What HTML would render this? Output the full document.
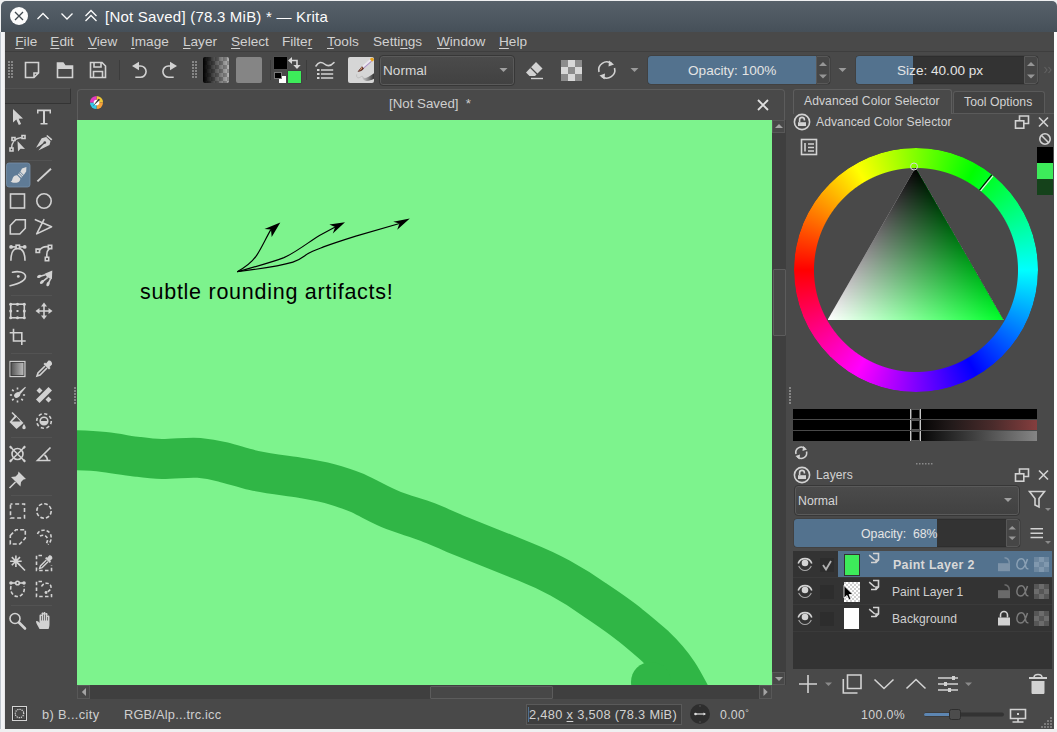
<!DOCTYPE html>
<html><head><meta charset="utf-8">
<style>
*{box-sizing:border-box;margin:0;padding:0}
html,body{width:1057px;height:732px;overflow:hidden;background:#eff0f1;font-family:"Liberation Sans",sans-serif;font-size:13.5px;color:#d4d4d4}
.a{position:absolute}
svg{position:absolute;overflow:visible}
.t{position:absolute;white-space:nowrap;line-height:16px;height:16px}
#title{left:1px;top:1px;width:1056px;height:31px;border-radius:5px 5px 0 0;background:linear-gradient(#57616a,#465059)}
#leftstrip{left:0px;top:32px;width:5px;height:697px;background:linear-gradient(90deg,#b9c0c8 0,#c4cad0 1px,#f4f5f7 1.5px,#f1f2f4 4.3px,#d0d0d0 5px)}
#rightstrip{left:1054px;top:32px;width:3px;height:697px;background:#fcfcfc}
#win{left:5px;top:32px;width:1049px;height:697px;background:#494949}
.ic{stroke:#d2d2d2;fill:none;stroke-width:1.6}
.if{fill:#d2d2d2;stroke:none}
u{text-decoration-thickness:1px;text-underline-offset:2px}
.m{top:34px;font-size:13.6px;color:#d0d0d0}
</style></head><body>
<div class="a" id="title"></div>
<div class="a" id="leftstrip"></div>
<div class="a" id="rightstrip"></div>
<div class="a" id="win"></div>

<svg style="left:0;top:0" width="540" height="33">
<circle cx="19" cy="16" r="9" fill="#fcfcfc"/>
<path d="M15 12L23 20M23 12L15 20" stroke="#3f484f" stroke-width="1.3" fill="none"/>
<path d="M37.5 19L43 13.5L48.5 19" stroke="#fcfcfc" stroke-width="1.3" fill="none"/>
<path d="M61.5 13.5L67 19L72.5 13.5" stroke="#fcfcfc" stroke-width="1.3" fill="none"/>
<path d="M85.5 16L91 10.5L96.5 16M85.5 21L91 15.5L96.5 21" stroke="#fcfcfc" stroke-width="1.3" fill="none"/>
</svg>
<div class="t" id="ttl" style="left:105px;top:8px;font-size:15px;line-height:18px;height:18px;color:#fcfcfc;letter-spacing:0.22px">[Not Saved] (78.3 MiB) * — Krita</div>


<div class="a" style="left:5px;top:51px;width:1049px;height:1px;background:#3e3e3e"></div>
<div class="t m" style="left:15.300px"><u>F</u>ile</div>
<div class="t m" style="left:50.300px"><u>E</u>dit</div>
<div class="t m" style="left:88px"><u>V</u>iew</div>
<div class="t m" style="left:131px"><u>I</u>mage</div>
<div class="t m" style="left:183px"><u>L</u>ayer</div>
<div class="t m" style="left:231px"><u>S</u>elect</div>
<div class="t m" style="left:282px">Filte<u>r</u></div>
<div class="t m" style="left:327px"><u>T</u>ools</div>
<div class="t m" style="left:373px">Setti<u>n</u>gs</div>
<div class="t m" style="left:437px"><u>W</u>indow</div>
<div class="t m" style="left:499px"><u>H</u>elp</div>


<svg style="left:0;top:0" width="1057" height="90">
<!-- handles -->
<g fill="#868686"><g id="hd"><rect x="8" y="61" width="2" height="2"/><rect x="11" y="61" width="2" height="2"/><rect x="8" y="64" width="2" height="2"/><rect x="11" y="64" width="2" height="2"/><rect x="8" y="67" width="2" height="2"/><rect x="11" y="67" width="2" height="2"/><rect x="8" y="70" width="2" height="2"/><rect x="11" y="70" width="2" height="2"/><rect x="8" y="73" width="2" height="2"/><rect x="11" y="73" width="2" height="2"/><rect x="8" y="76" width="2" height="2"/><rect x="11" y="76" width="2" height="2"/></g><use href="#hd" x="184"/></g>
<rect x="119" y="60" width="1" height="20" fill="#3c3c3c"/>
<!-- new -->
<path class="ic" d="M25.5 62.5H38.5V73L34 77.5H25.5Z M38.5 73H34V77.5"/>
<!-- open -->
<path class="ic" d="M57.5 77.5V63H63L65 66H72.5V77.5Z"/><path class="if" d="M57 63H63L65 66H73V69H57Z"/>
<!-- save -->
<path class="ic" d="M90.500 62.500H102L105.500 66V77.500H90.500Z M94 62.500V67H101V62.500 M93.500 77.500V71.500H102.500V77.500"/>
<!-- undo -->
<path class="ic" stroke-width="2.100" d="M138 66H140.500A5.600 5.600 0 0 1 140.500 77.200H135.300"/><path class="if" d="M132 66L139 61.800V70.200Z"/>
<!-- redo -->
<path class="ic" stroke-width="2.100" d="M171 66H168.500A5.600 5.600 0 0 0 168.500 77.200H173.700"/><path class="if" d="M177 66L170 61.800V70.200Z"/>
</svg>
<!-- gradient swatch -->
<div class="a" style="left:203px;top:57px;width:26px;height:26px;border-radius:2px;background:linear-gradient(90deg,#000 0%,rgba(0,0,0,0) 100%),repeating-conic-gradient(#8c8c8c 0 25%,#b4b4b4 0 50%) 0 0/8px 8px"></div>
<div class="a" style="left:236px;top:57px;width:26px;height:26px;border-radius:2px;background:#858585"></div>
<!-- fg/bg -->
<div class="a" style="left:273.5px;top:57px;width:13px;height:12px;background:#000;box-shadow:0 0 0 0.5px #555"></div>
<div class="a" style="left:287.5px;top:71px;width:13px;height:12px;background:#3dec5a;box-shadow:0 0 0 0.5px #3a3a3a"></div>
<div class="a" style="left:279px;top:75.500px;width:6.500px;height:7px;background:#fff"></div>
<div class="a" style="left:274px;top:71.500px;width:7.500px;height:7px;background:#000;border:1px solid #777"></div>
<svg style="left:0;top:0" width="1057" height="90">
<path d="M291.500 60.500H297V65.500" stroke="#d8d8d8" stroke-width="1.600" fill="none"/><path d="M288 60.500L292 57V64Z M297 69L293.300 65H300.700Z" fill="#d8d8d8"/>
<rect x="270" y="60" width="1" height="20" fill="#3c3c3c"/><rect x="306" y="60" width="1" height="20" fill="#3c3c3c"/>
<!-- brush settings icon -->
<path class="ic" stroke-width="2.200" stroke-linecap="round" d="M316 66C318.500 62 321.500 61.500 324.500 64S330.500 66.500 334 62.500"/>
<path class="ic" stroke-width="2.100" d="M321 70H333.200M321 74H333.200M321 78H333.200"/><path class="if" d="M317 69H319.500V71H317ZM317 73H319.500V75H317ZM317 77H319.500V79H317Z"/>
</svg>
<!-- brush preset -->
<div class="a" style="left:348px;top:57px;width:26px;height:26px;border-radius:2px;background:#d6d6d6;overflow:hidden">
<svg style="left:0;top:0" width="26" height="26"><defs><linearGradient id="bs" x1="0" x2="1"><stop offset="0" stop-color="#c6c6c6"/><stop offset="0.45" stop-color="#8a8a8a"/><stop offset="1" stop-color="#2e2e2e"/></linearGradient></defs>
<path d="M8.700 17.500C8 21 10.500 21.500 12.500 20C14.500 18.500 15 19.500 15 21" stroke="#bdbdbd" stroke-width="1" fill="none"/>
<path d="M14.500 19.800C16 22 20 21 26.500 15.800L26.500 21.500C21 24.500 16.500 25 14.500 21.500Z" fill="url(#bs)"/>
<path d="M14 9.300L22 2.300L24 4.600L16 11.600Z" fill="#ece8f0"/><path d="M15.300 10.800L23.300 3.800L24 4.600L16 11.600Z" fill="#a98fc0"/>
<path d="M14 9.300L16 11.600C14 14 12 15 9.500 14.800C11 13 12.500 11 14 9.300Z" fill="#5a2a22"/><path d="M13.700 10L14.500 10.800C13.500 12.500 12.500 13.500 11 14.200C12 12.800 12.800 11.500 13.700 10Z" fill="#d9a078"/>
<path d="M22 2.300C22.500 0.800 24.500 0.300 25.500 1.500C26.500 2.700 25.500 4.300 24 4.600Z" fill="#e8a21c"/></svg></div>
<!-- combo -->
<div class="a" style="left:379px;top:54.500px;width:135.500px;height:31px;border:1px solid #373737;border-radius:4px;background:linear-gradient(#4b4b4b,#414141);box-shadow:inset 0 0 0 1px #5a5a5a"></div>
<div class="t" style="left:383px;top:63px;font-size:13.6px;color:#d6d6d6">Normal</div>
<svg style="left:0;top:0" width="1057" height="90">
<path class="if" fill="#9a9a9a" d="M499.500 68H507.500L503.500 72Z" style="fill:#a0a0a0"/>
<!-- eraser -->
<path class="if" d="M536 62L542.500 68.500L535 76H529.500L526 72.500Z"/><path d="M531 78.500H543" stroke="#d2d2d2" stroke-width="1.4"/><path d="M530.500 67.500L537.500 74.500" stroke="#494949" stroke-width="1.2"/>
<!-- alpha checker -->
<g><rect x="561" y="60" width="21" height="21" fill="#5e5e5e"/><g fill="#d8d8d8"><rect x="568" y="60" width="7" height="7"/><rect x="561" y="67" width="7" height="7"/><rect x="575" y="67" width="7" height="7"/><rect x="568" y="74" width="7" height="7"/></g><g fill="#8c8c8c"><rect x="561" y="60" width="7" height="7"/><rect x="575" y="60" width="7" height="7"/><rect x="568" y="67" width="7" height="7"/><rect x="561" y="74" width="7" height="7"/><rect x="575" y="74" width="7" height="7"/></g></g>
<!-- reload -->
<path class="ic" stroke-width="1.8" d="M599 72A8 8 0 0 1 611.500 63.500M614.500 68A8 8 0 0 1 602 76.500"/><path class="if" d="M609 60.500L614 64.500L608.500 66.500ZM604.500 79.500L599.500 75.500L605 73.500Z"/>
<path d="M630.500 68H638.500L634.500 72Z" fill="#9a9a9a"/>
<path d="M838.500 68H846.500L842.500 72Z" fill="#9a9a9a"/>
<path d="M1044.500 67L1047 70L1044.500 73M1048.500 67L1051 70L1048.500 73" stroke="#626262" stroke-width="1.100" fill="none"/>
</svg>
<!-- opacity slider -->
<div class="a" style="left:647.5px;top:56px;width:182.5px;height:28px;border-radius:3px;background:#333;box-shadow:inset 0 0 0 1px #2e2e2e,0 0 0 0.500px #3a3a3a;overflow:hidden"><div class="a" style="left:0;top:0;width:168.5px;height:28px;background:#53728e"></div><div class="a" style="left:168.5px;top:0;width:14px;height:28px;background:#464646;border:1px solid #585858;border-radius:0 3px 3px 0"></div></div>
<div class="t" style="left:688px;top:63px;font-size:13.6px;color:#e4e4e4">Opacity: 100%</div>
<div class="a" style="left:856px;top:56px;width:182px;height:28px;border-radius:3px;background:#333;box-shadow:inset 0 0 0 1px #2e2e2e,0 0 0 0.500px #3a3a3a;overflow:hidden"><div class="a" style="left:0;top:0;width:57px;height:28px;background:#53728e"></div><div class="a" style="left:168px;top:0;width:14px;height:28px;background:#464646;border:1px solid #585858;border-radius:0 3px 3px 0"></div></div>
<div class="t" style="left:897px;top:63px;font-size:13.6px;color:#e4e4e4">Size: 40.00 px</div>
<svg style="left:0;top:0" width="1057" height="90"><g fill="#969696"><path d="M819 66H827L823 62Z M819 74.500H827L823 78.500Z M1027 66H1035L1031 62Z M1027 74.500H1035L1031 78.500Z"/></g></svg>


<svg style="left:0;top:0" width="90" height="700"><rect x="11" y="160" width="41" height="1" fill="#535353"/><rect x="11" y="295" width="41" height="1" fill="#535353"/><rect x="11" y="353" width="41" height="1" fill="#535353"/><rect x="11" y="437" width="41" height="1" fill="#535353"/><rect x="11" y="495" width="41" height="1" fill="#535353"/><rect x="11" y="605" width="41" height="1" fill="#535353"/><g fill="#858585"><rect x="74" y="387" width="2" height="2"/><rect x="74" y="390" width="2" height="2"/><rect x="74" y="393" width="2" height="2"/><rect x="74" y="396" width="2" height="2"/><rect x="74" y="399" width="2" height="2"/><rect x="74" y="402" width="2" height="2"/></g><g transform="translate(17.5 117)"><path class="if" d="M-4.500 -8V5.500L-1.200 2.600L1.300 8L3.600 7L1.200 1.700L5.500 1.500Z"/></g><g transform="translate(44 117)"><path class="if" d="M-7 -7.500H7V-3.500H5.500V-5.700H1V6H3.500V7.500H-3.500V6H-1V-5.700H-5.500V-3.500H-7Z"/></g><g transform="translate(17.5 143.5)"><path class="ic" stroke-width="1.3" d="M-6 5.500C-6 -1 -4 -5 4 -6"/><path class="ic" stroke-width="1.2" d="M-7.500 4.500H-4.500V7.500H-7.500ZM-5.500 -6H-2.500V-3H-5.500ZM4.500 -8H7.500V-5H4.500Z" style="fill:#494949"/><path class="if" d="M0 -2.500L7.500 5.500L3 5.200L0.500 8Z"/></g><g transform="translate(44 143.5)"><path class="if" d="M-8 4.300L-2.300 -5.300L2.200 -6.500L6.500 -2.200L5.500 1.500L-5.600 6.900L-0.500 0.300Z"/><path class="ic" stroke-width="1.800" d="M2.800 -8L7.800 -3.600"/><path d="M-7 5.800L0.200 -0.500" stroke="#494949" stroke-width="1.300"/><circle cx="0.800" cy="-0.900" r="1.300" fill="#494949"/></g><g transform="translate(17.5 175)"><rect x="-11" y="-12" width="23.500" height="24" rx="2.500" fill="#5f7b96" stroke="#7790a9" stroke-width="0.800"/><g fill="#dcdcdc"><path d="M-0.300 0.300L2.800 3.400C3 6 0.500 8 -2.500 7.800C-4.500 7.800 -6 7.300 -7 6.800C-5 6 -5.500 4 -4.500 2.500C-3.500 0.800 -1.800 0 -0.300 0.300Z"/><path d="M0.400 -0.500L1.200 -1.400L4.500 1.900L3.700 2.800Z"/><path d="M1.700 -1.900L2.400 -2.700L5.800 0.600L5 1.400Z"/><path d="M2.900 -3.300L4.500 -6.600L8.900 -7.900L8.700 -3.600L6.200 0Z"/></g></g><g transform="translate(44 175)"><path d="M-6.600 6.400L7 -6.200" stroke="#d2d2d2" stroke-width="1.900"/></g><g transform="translate(17.5 201)"><rect class="ic" x="-7" y="-7" width="14" height="14" stroke-width="1.700"/></g><g transform="translate(44 201)"><circle class="ic" cx="0" cy="0" r="7.200" stroke-width="1.700"/></g><g transform="translate(17.5 227)"><path class="ic" stroke-width="1.900" d="M-7.200 -1.500L-1.700 -7.200H7.800V1.200L2.300 7H-7.200Z"/></g><g transform="translate(44 227)"><path class="ic" stroke-width="1.900" stroke-linejoin="round" stroke-linecap="round" d="M-8.600 -7.300L7.600 -0.200L-7.300 6.900L-0.100 -7.400"/></g><g transform="translate(17.5 253)"><path class="ic" stroke-width="1.900" d="M-6.600 7.800C-6.600 -1 -3.500 -4.700 0.400 -4.700S7.500 -1 7.500 7.800"/><path class="ic" stroke-width="1.300" d="M-6.400 -6.100H7"/><circle cx="-6.400" cy="-6.100" r="1.900" class="if"/><circle cx="7.200" cy="-6.100" r="1.900" class="if"/><rect x="-1.400" y="-7.800" width="3.400" height="3.400" class="ic" stroke-width="1.100" style="fill:#494949"/></g><g transform="translate(44 253)"><path class="ic" stroke-width="1.800" d="M-4.500 -2.800C-2 -6 2 -6.600 4.300 -6.200M5.300 -4.300C2.700 -2 2.500 1.500 3 4.300"/><path class="ic" stroke-width="1.200" d="M-7.900 -3.900H-4.500V-0.500H-7.900ZM4.300 -7.800H7.700V-4.400H4.300ZM1.300 4.300H4.700V7.700H1.300Z" style="fill:#494949"/></g><g transform="translate(17.5 279)"><path class="ic" stroke-width="1.900" stroke-linecap="round" d="M-5 -6.800C0 -8 7 -7.500 8 -3C8.500 1.500 0 5 -7.400 6.800"/><circle cx="0.800" cy="-2.600" r="1.400" class="if"/></g><g transform="translate(44 279)"><path class="if" d="M8.300 -8.400L0.600 -5.300L2.600 -2.600L5.200 -0.800L7.900 0.200Z"/><path class="ic" stroke-width="1.200" d="M1.500 -4.300L-4.700 -2.600M3.800 -1.700L-2.100 3.100M6.700 -0.500L4 5.100"/><ellipse cx="-4.700" cy="-2.600" rx="2.300" ry="1.500" transform="rotate(-20 -4.700 -2.600)" class="if"/><ellipse cx="-2.100" cy="3.100" rx="2.300" ry="1.500" transform="rotate(-40 -2.100 3.100)" class="if"/><ellipse cx="4" cy="5.100" rx="2.300" ry="1.500" transform="rotate(-65 4 5.100)" class="if"/></g><g transform="translate(17.5 311)"><rect class="ic" x="-6.800" y="-6.800" width="13.600" height="13.600" stroke-width="1.700"/><g class="if"><circle cx="-6.8" cy="-6.8" r="1.500"/><circle cx="-6.8" cy="0" r="1.500"/><circle cx="-6.8" cy="6.8" r="1.500"/><circle cx="0" cy="-6.8" r="1.500"/><circle cx="0" cy="6.8" r="1.500"/><circle cx="6.8" cy="-6.8" r="1.500"/><circle cx="6.8" cy="0" r="1.500"/><circle cx="6.8" cy="6.8" r="1.500"/><rect x="-1" y="-1" width="2" height="2"/></g></g><g transform="translate(44 311)"><path class="ic" stroke-width="1.600" d="M0 -6V6M-6 0H6"/><path class="if" d="M0 -8.500L3 -4.500H-3ZM0 8.500L3 4.500H-3ZM-8.500 0L-4.500 -3V3ZM8.500 0L4.500 -3V3Z"/></g><g transform="translate(17.5 337)"><path class="ic" stroke-width="2.100" d="M-4 -8.200V4H8.200M-7.800 -4.300H4.300V8"/></g><g transform="translate(17.5 369)"><defs><linearGradient id="gg" x1="0" x2="1"><stop offset="0" stop-color="#4a4a4a"/><stop offset="1" stop-color="#c8c8c8"/></linearGradient></defs><rect x="-7.500" y="-7.600" width="15" height="15.200" fill="url(#gg)" stroke="#d2d2d2" stroke-width="1.100"/><rect x="-6.400" y="-6.500" width="12.800" height="13" fill="none" stroke="#3a3a3a" stroke-width="0.800"/></g><g transform="translate(44 369)"><path class="if" d="M4.500 -8.500C6.500 -9 8.500 -7 8 -4.500L5.500 -2L6.500 -1L5 0.500L-0.500 -5L1 -6.500L2 -5.500Z"/><path class="ic" stroke-width="1.400" d="M1 -3L-6 4L-7 7L-4 6L3 -1"/></g><g transform="translate(17.5 395)"><ellipse cx="-0.300" cy="0" rx="3.400" ry="2.400" transform="rotate(-38 -0.300 0)" class="if"/><path class="if" d="M1.300 -2.800L7.700 -8.300L8.400 -7.400L3 -1Z"/><path class="ic" stroke-width="1.700" d="M5.40 0.00L7.60 0.00M3.82 3.82L5.37 5.37M0.00 5.40L0.00 7.60M-3.82 3.82L-5.37 5.37M-5.40 0.00L-7.60 0.00M-3.82 -3.82L-5.37 -5.37M-0.00 -5.40L-0.00 -7.60"/></g><g transform="translate(44 395)"><path class="if" d="M4.500 -8L8 -4.500L-4.500 8L-8 4.500Z"/><path class="if" d="M-4.500 -7.500L-1.500 -4.500L-4.500 -1.500L-7.500 -4.500ZM4.500 1.500L7.500 4.500L4.500 7.500L1.500 4.500Z"/></g><g transform="translate(17.5 421)"><path class="if" d="M-2 -6L6 2L-1 8L-8 1Z"/><path class="ic" stroke-width="1.500" d="M-5.500 -8.500L-1 -4"/><path d="M-5.500 0.500L3 0.500L-1 -4Z" fill="#494949"/><path class="if" d="M6.500 3C8 5 8.500 6.500 8 7.500C7.500 8.500 5.500 8.500 5 7.500C4.500 6.500 5 5 6.500 3Z"/></g><g transform="translate(44 421)"><circle class="ic" cx="0" cy="0" r="7.300" stroke-width="1.600" stroke-dasharray="3.200 2.530"/><circle class="ic" cx="0" cy="0" r="3.800" stroke-width="1.300"/><path class="if" d="M-3.800 0H3.800A3.800 3.800 0 0 1 -3.800 0Z"/></g><g transform="translate(17.5 454)"><circle class="ic" cx="0" cy="0" r="5.500" stroke-width="1.400"/><path class="ic" stroke-width="1.400" d="M-7 -7L7 7M7 -7L-7 7"/><path class="if" d="M-8.500 -7L-7 -8.500L-5 -6.500L-6.500 -5ZM8.500 -7L7 -8.500L5 -6.500L6.500 -5ZM-8.500 7L-7 8.500L-5 6.500L-6.500 5ZM8.500 7L7 8.500L5 6.500L6.500 5Z"/></g><g transform="translate(44 454)"><path class="ic" stroke-width="1.700" d="M6.500 -6.500L-6.500 6.500H6.500"/><path class="ic" stroke-width="1.400" d="M0.500 1C2.500 2.500 3.500 4.500 3.500 6.500"/></g><g transform="translate(17.5 480)"><path class="if" d="M1 -8.500L8.500 -1L6 -0.500L3.500 2L3 6.500L-6.500 -3L-2 -3.500L0.500 -6Z"/><path class="ic" stroke-width="1.400" d="M-2 2L-8 8"/></g><g transform="translate(17.5 511)"><rect class="ic" x="-7" y="-7" width="14" height="14" stroke-width="1.900" stroke-dasharray="4 2.670" stroke-dashoffset="2"/></g><g transform="translate(44 511)"><circle class="ic" cx="0" cy="0" r="7.200" stroke-width="1.900" stroke-dasharray="3.650 2"/></g><g transform="translate(17.5 537)"><path class="ic" stroke-width="1.900" stroke-dasharray="4 2.150" d="M-7.200 -1.500L-1.700 -7.200H7.800V1.200L2.300 7H-7.200Z"/></g><g transform="translate(44 537)"><path class="ic" stroke-width="1.700" stroke-dasharray="3.300 2" d="M-6.500 -3C-5 -8 4 -8 6.500 -3C8 1 7 5 4 7.500M-4 -1C0 -3 3 -1 3.500 2C3.800 4 3 5.500 2 7"/></g><g transform="translate(17.5 563)"><path class="ic" stroke-width="1.700" d="M-1.600 -1.800L7.500 7.500"/><path class="ic" stroke-width="1.500" d="M-1.600 -7.600V4M-7.400 -1.800H4.200M-5.700 -5.900L2.500 2.300M2.500 -5.900L-5.700 2.300"/></g><g transform="translate(44 563)"><path class="ic" stroke-width="1.600" stroke-dasharray="3.500 2.300" d="M-2 -7.500H-7.500V7.500H7.500V2"/><g transform="translate(1.500 -0.500) scale(0.850)"><path class="if" d="M4.500 -8.500C6.500 -9 8.500 -7 8 -4.500L5.500 -2L6.500 -1L5 0.500L-0.500 -5L1 -6.500L2 -5.500Z"/><path class="ic" stroke-width="1.400" d="M1 -3L-6 4L-7 7L-4 6L3 -1"/></g></g><g transform="translate(17.5 589)"><path class="ic" stroke-width="1.700" stroke-dasharray="3.500 2" d="M-6.500 -3C-8 3 -4 7.500 0 7.500S8 3 6.500 -3"/><path class="ic" stroke-width="1.200" d="M-6 -6H6"/><circle cx="-6.500" cy="-6" r="1.800" class="if"/><circle cx="6.500" cy="-6" r="1.800" class="if"/><circle cx="0" cy="-6" r="1.800" class="ic" stroke-width="1.100" style="fill:#494949"/></g><g transform="translate(44 589)"><path class="ic" stroke-width="1.600" stroke-dasharray="3.500 2.300" d="M-2 -7.500H-7.500V7.500H7.500V5"/><path class="ic" stroke-width="1.600" stroke-dasharray="3.300 1.800" d="M-2.500 -2.500C0 -7.500 7.500 -6.500 7 -1.500C6.500 2 3 2.500 2.500 4.500"/><circle cx="2" cy="3.500" r="1.400" class="if"/></g><g transform="translate(17.5 621)"><circle class="ic" cx="-2.500" cy="-2.500" r="5" stroke-width="1.800"/><path d="M1.500 1.500L7.500 7.500" stroke="#d2d2d2" stroke-width="2.600" stroke-linecap="round"/></g><g transform="translate(44 621)"><path class="if" d="M-4.500 8C-6 5 -8 2 -8 0.500C-7 -0.500 -5.500 0.500 -4.500 2V-5.500C-4.500 -7 -2.500 -7 -2.500 -5.500V-7.500C-2.500 -9 -0.500 -9 -0.500 -7.500V-8C-0.500 -9.500 1.500 -9.500 1.500 -8V-7C1.500 -8.500 3.500 -8.500 3.500 -7V-4.500C3.500 -6 5.500 -6 5.500 -4.500V3C5.500 5.500 5 7 4.500 8Z"/><path d="M-2.500 -5V-0.500M-0.500 -6.500V-0.500M1.500 -6.500V-0.500M3.500 -4V-0.500" stroke="#494949" stroke-width="0.700"/></g></svg>

<!-- document tab frame -->
<div class="a" style="left:77px;top:89px;width:708px;height:32px;border:1px solid #5c5c5c;border-bottom:none;border-radius:4px 4px 0 0;background:#494949"></div>
<div class="a" style="left:5px;top:88px;width:66px;height:16px;background:#464646;border-top:1px solid #525252;border-bottom:1px solid #343434;border-right:1px solid #343434"></div>
<div class="t" style="left:389px;top:96px;font-size:13.3px;color:#cfcfcf">[Not Saved]&nbsp; *</div>
<svg style="left:756px;top:98px" width="14" height="14"><path d="M2 2L12 12M12 2L2 12" stroke="#e0e0e0" stroke-width="1.8" fill="none"/></svg>
<!-- krita doc icon -->
<svg style="left:89px;top:95px" width="15" height="15" viewBox="0 0 16 16"><circle cx="8" cy="8" r="7" fill="#3a3a3a"/><path d="M8 1A7 7 0 0 1 15 8L8 8Z" fill="#f0c838"/><path d="M15 8A7 7 0 0 1 8 15L8 8Z" fill="#f7a23a"/><path d="M8 15A7 7 0 0 1 1 8L8 8Z" fill="#36c8e8"/><path d="M1 8A7 7 0 0 1 8 1L8 8Z" fill="#e13cc0"/><circle cx="8" cy="8" r="3" fill="#fff"/><path d="M4 12L10 4L12 5Z" fill="#3a3a3a"/></svg>
<!-- canvas -->
<div class="a" style="left:77px;top:120px;width:695px;height:565px;background:#7df38d;overflow:hidden">
<svg style="left:0;top:0" width="695" height="565" viewBox="77 120 695 565">
<path d="M50 450 C65 450 90 450.5 104 452 C120 454 130 456 138 456.8 C148 458.3 154 459 162 459 C176 459 188 457 199 457.9 C208 458.6 215 460 223 462 C234 464.8 243 468 254 470.5 C270 474 286 475.5 301.6 478 C314 480.2 325 482 335.7 485.4 C345 488.3 352 490.5 359.5 494 C372 500 381 505.5 393.6 510.5 C405 515 416 517.5 427.6 522 C437 525.6 446 530 455 533.7 L490 547.7 L525 561.7 C537 566.5 549 572 560 578 C572 584.5 584 592 595 600 C607 608 619 616 630 625 C639 632 648 640 655 646 C664 654.5 672 664 678 673 C684 682 690 694 696 706" fill="none" stroke="#30b646" stroke-width="40" stroke-linecap="round" stroke-linejoin="round"/>
<circle cx="651" cy="682" r="20" fill="#30b646"/>
<g fill="none" stroke="#000" stroke-width="1.15">
<path d="M237.2 271.7 C246 267 253 261 257 254.9 C262 247 266 238 271 229.4"/>
<path d="M237.2 271.7 C252 267.500 270 263 283.900 257.600 C296 252.500 310 241 319.900 235.200 L335.200 227.100"/>
<path d="M237.2 271.7 C255 269.500 278 266.500 292.900 262.100 C300 260 304 256 307.300 254 C312 251 318 249 323.500 246.900 C334 243 345 239.500 355.800 236.100 L399.500 223.500"/>
</g>
<g fill="#000">
<path d="M280.300 222.600 L264.500 228.900 L271 229.400 L271.700 237Z"/>
<path d="M345 222.200 L329.400 224.400 L335.200 227.100 L332.800 233.400Z"/>
<path d="M409.800 218.600 L393.200 221.700 L399.500 223.500 L397.200 229.800Z"/>
</g>
</svg>
<div class="t" id="ctext" style="left:63px;top:159px;font-size:21.5px;line-height:26px;height:26px;color:#000;letter-spacing:0.74px">subtle rounding artifacts!</div>
</div>
<!-- scrollbars -->
<div class="a" style="left:772px;top:120px;width:13.700px;height:565px;background:#3f3f3f"></div>
<div class="a" style="left:77px;top:685px;width:695px;height:14px;background:#3f3f3f"></div>
<div class="a" style="left:772px;top:685px;width:13px;height:14px;background:#494949"></div>
<div class="a" style="left:773px;top:269px;width:12.700px;height:67px;background:#474747;border:1px solid #5c5c5c;border-radius:1px"></div>
<div class="a" style="left:429.500px;top:686px;width:123px;height:12.500px;background:#474747;border:1px solid #5c5c5c;border-radius:1px"></div>
<div class="a" style="left:77px;top:685px;width:13px;height:14px;background:#484848;border:1px solid #585858"></div>
<div class="a" style="left:759px;top:685px;width:13px;height:14px;background:#484848;border:1px solid #585858"></div>
<div class="a" style="left:772px;top:120px;width:13px;height:13px;background:#484848;border:1px solid #585858"></div>
<div class="a" style="left:772px;top:672px;width:13px;height:13px;background:#484848;border:1px solid #585858"></div>
<svg style="left:0;top:0" width="1057" height="732"><g fill="#a4a4a4"><path d="M86 688V696L81.800 692Z"/><path d="M763.500 688V696L767.700 692Z"/><path d="M775 128H783L779 124Z"/><path d="M775 677H783L779 681Z"/></g></svg>
<!--CANVAS-END-->

<!-- docker tabs -->
<div class="a" style="left:953px;top:91px;width:92px;height:23px;border:1px solid #5a5a5a;border-bottom:none;border-radius:3px 3px 0 0;background:#424242"></div>
<div class="a" style="left:952px;top:113px;width:102px;height:1px;background:#5a5a5a"></div>
<div class="a" style="left:793px;top:89px;width:159px;height:25px;border:1px solid #5e5e5e;border-bottom:none;border-radius:3px 3px 0 0;background:#494949"></div>
<div class="t" style="left:804px;top:93px;font-size:12.1px;color:#d2d2d2;letter-spacing:0.08px">Advanced Color Selector</div>
<div class="t" style="left:964px;top:94px;font-size:12.2px;color:#d2d2d2;letter-spacing:0.05px">Tool Options</div>
<div class="t" style="left:816px;top:114px;font-size:12.1px;color:#d2d2d2;letter-spacing:0.08px">Advanced Color Selector</div>
<svg style="left:0;top:0" width="1057" height="480">
<g id="lockic"><circle cx="802" cy="122" r="7.600" class="ic" stroke-width="1.400"/><path class="ic" stroke-width="1.300" d="M799.600 122V119.800A2.400 2.400 0 0 1 804.400 119.800V120.600"/><rect x="798" y="122.200" width="8" height="3.800" class="if"/></g>
<g id="floatic"><path class="ic" stroke-width="1.300" d="M1019.500 121V116H1028.500V123.500H1024"/><rect x="1015.500" y="120.800" width="8.300" height="7.400" class="ic" stroke-width="1.300" style="fill:#494949"/></g>
<path id="closeic" class="ic" stroke-width="1.500" d="M1039 117.500L1048 126.500M1048 117.500L1039 126.500"/>
<use href="#lockic" y="353"/><use href="#floatic" y="353"/><use href="#closeic" y="353"/>
<!-- no-color -->
<circle cx="1045" cy="139" r="5.200" class="ic" stroke-width="1.500"/><path class="ic" stroke-width="1.500" d="M1041.300 135.300L1048.700 142.700"/>
<!-- config icon -->
<rect x="801.500" y="139.500" width="15" height="15" class="ic" stroke-width="1.200"/><path class="ic" stroke-width="1.400" d="M805 143V151.500M808 144H814M808 147.500H814M808 151H814"/>
<!-- hue marker -->
<!-- refresh -->
<path class="ic" stroke-width="1.600" d="M796 454A5.500 5.500 0 0 1 805 448.500M806.500 451.500A5.500 5.500 0 0 1 797.500 457"/><path class="if" d="M803 446L807 449.500L802.500 451ZM799.500 459.500L795.500 456L800 454.500Z"/>
<g fill="#8a8a8a"><rect x="916" y="463" width="1.500" height="1.500"/><rect x="919" y="463" width="1.500" height="1.500"/><rect x="922" y="463" width="1.500" height="1.500"/><rect x="925" y="463" width="1.500" height="1.500"/><rect x="928" y="463" width="1.500" height="1.500"/><rect x="931" y="463" width="1.500" height="1.500"/></g>
<g fill="#858585"><rect x="789" y="387" width="2" height="2"/><rect x="789" y="390" width="2" height="2"/><rect x="789" y="393" width="2" height="2"/><rect x="789" y="396" width="2" height="2"/><rect x="789" y="399" width="2" height="2"/><rect x="789" y="402" width="2" height="2"/></g>
</svg>
<!-- ring -->
<div class="a" style="left:793.5px;top:147.5px;width:244px;height:244px;border-radius:50%;background:conic-gradient(hsl(90,100%,50%) 0deg,hsl(105,100%,50%) 15deg,hsl(120,100%,50%) 30deg,hsl(135,100%,50%) 45deg,hsl(150,100%,50%) 60deg,hsl(165,100%,50%) 75deg,hsl(180,100%,50%) 90deg,hsl(195,100%,50%) 105deg,hsl(210,100%,50%) 120deg,hsl(225,100%,50%) 135deg,hsl(240,100%,50%) 150deg,hsl(255,100%,50%) 165deg,hsl(270,100%,50%) 180deg,hsl(285,100%,50%) 195deg,hsl(300,100%,50%) 210deg,hsl(315,100%,50%) 225deg,hsl(330,100%,50%) 240deg,hsl(345,100%,50%) 255deg,hsl(0,100%,50%) 270deg,hsl(15,100%,50%) 285deg,hsl(30,100%,50%) 300deg,hsl(45,100%,50%) 315deg,hsl(60,100%,50%) 330deg,hsl(75,100%,50%) 345deg,hsl(90,100%,50%) 360deg);-webkit-mask:radial-gradient(circle,transparent 101.5px,#000 102.5px);mask:radial-gradient(circle,transparent 101.5px,#000 102.5px)"></div>
<!-- triangle -->
<div class="a" style="left:827.5px;top:167.5px;width:176.0px;height:152.5px;clip-path:polygon(50% 0,100% 100%,0 100%);background:linear-gradient(to bottom,#000,rgba(0,0,0,0)),conic-gradient(from 150deg at 50% 0,rgb(0,255,42) 0deg,rgb(47,255,81) 10deg,rgb(89,255,116) 20deg,rgb(128,255,148) 30deg,rgb(166,255,181) 40deg,rgb(208,255,216) 50deg,rgb(255,255,255) 60deg)"></div>
<svg style="left:0;top:0" width="1057" height="480">
<path d="M979.550 190.120L991.800 174.940" stroke="#000" stroke-width="1.200"/><path d="M980.600 190.960L993.030 175.950" stroke="#e8e8e8" stroke-width="1.200"/>
<circle cx="914" cy="166.500" r="3.500" fill="none" stroke="#d8d8d8" stroke-width="1"/>
</svg>
<!-- side swatches -->
<div class="a" style="left:1037px;top:147px;width:16px;height:16px;background:#000"></div>
<div class="a" style="left:1037px;top:163px;width:16px;height:16px;background:#3deb5a"></div>
<div class="a" style="left:1037px;top:179px;width:16px;height:16px;background:#15421b"></div>
<!-- shade bars -->
<div class="a" style="left:793px;top:409px;width:244px;height:10px;background:#000"></div>
<div class="a" style="left:793px;top:420px;width:244px;height:10px;background:linear-gradient(90deg,#000 50%,#221a1a 65%,#4a2b2b 82%,#853e3e 100%)"></div>
<div class="a" style="left:793px;top:431px;width:244px;height:10px;background:linear-gradient(90deg,#000 50%,#858585 100%)"></div>
<div class="a" style="left:910px;top:409px;width:11px;height:10px;background:#000;border-left:1px solid #c4c4c4;border-right:1px solid #c4c4c4;box-shadow:inset 0 0 0 1px #555"></div><div class="a" style="left:910px;top:420px;width:11px;height:10px;background:#000;border-left:1px solid #c4c4c4;border-right:1px solid #c4c4c4;box-shadow:inset 0 0 0 1px #555"></div><div class="a" style="left:910px;top:431px;width:11px;height:10px;background:#000;border-left:1px solid #c4c4c4;border-right:1px solid #c4c4c4;box-shadow:inset 0 0 0 1px #555"></div>


<div class="t" style="left:816px;top:467px;font-size:12.1px;color:#d2d2d2;letter-spacing:0.1px">Layers</div>
<div class="a" style="left:793.500px;top:484.500px;width:226px;height:31px;border:1px solid #373737;border-radius:4px;background:linear-gradient(#4b4b4b,#414141);box-shadow:inset 0 0 0 1px #5a5a5a"></div>
<div class="t" style="left:798px;top:492.500px;font-size:12.3px;color:#d6d6d6">Normal</div>
<div class="a" style="left:794px;top:519px;width:225.5px;height:28px;border-radius:3px;background:#333;box-shadow:inset 0 0 0 1px #2e2e2e,0 0 0 0.500px #3a3a3a;overflow:hidden"><div class="a" style="left:0;top:0;width:143px;height:28px;background:#53728e"></div><div class="a" style="left:211.5px;top:0;width:14px;height:28px;background:#464646;border:1px solid #585858;border-radius:0 3px 3px 0"></div></div>
<div class="t" style="left:861px;top:525.500px;font-size:12.3px;color:#e4e4e4">Opacity:&nbsp; 68%</div>
<!-- list -->
<div class="a" style="left:793px;top:551px;width:259px;height:118px;background:#333"></div>
<div class="a" style="left:838px;top:551px;width:214px;height:27px;background:#53728e"></div>
<div class="a" style="left:793px;top:577px;width:259px;height:1px;background:#3a3a3a"></div>
<div class="a" style="left:793px;top:604px;width:259px;height:1px;background:#3a3a3a"></div>
<div class="a" style="left:793px;top:631px;width:259px;height:1px;background:#3a3a3a"></div>
<div class="a" style="left:820px;top:558px;width:14px;height:13.5px;background:#2d2d2d"></div>
<div class="a" style="left:820px;top:585px;width:14px;height:13.5px;background:#2d2d2d"></div>
<div class="a" style="left:820px;top:612px;width:14px;height:13.5px;background:#2d2d2d"></div>
<div class="a" style="left:844px;top:554px;width:16px;height:22px;background:#3deb5a;border:1px solid #333"></div>
<div class="a" style="left:844px;top:582px;width:16px;height:20px;background:#fff repeating-conic-gradient(#fff 0 25%,#d0d0d0 0 50%) 0 0/4px 4px"></div>
<div class="a" style="left:844px;top:608px;width:15px;height:21px;background:#fff"></div>
<div class="t" style="left:893px;top:556.500px;font-size:12.4px;font-weight:bold;color:#d8d8d8;letter-spacing:0.36px">Paint Layer 2</div>
<div class="t" style="left:892px;top:583.500px;font-size:12.1px;color:#d0d0d0;letter-spacing:0px">Paint Layer 1</div>
<div class="t" style="left:892px;top:610.500px;font-size:12.1px;color:#d0d0d0;letter-spacing:0.05px">Background</div>
<svg style="left:0;top:0" width="1057" height="732">
<path d="M1004 498H1012L1008 502Z" fill="#a0a0a0"/>
<path class="ic" stroke-width="1.300" d="M1029.500 491.500H1044.500L1039 498.500V507L1035 505V498.500Z"/><path d="M1045 508H1051L1048 511Z" fill="#8a8a8a"/>
<path class="ic" stroke-width="1.900" d="M1030.500 528.800H1043M1030.500 533.200H1043M1030.500 537.500H1043"/><path d="M1045 541H1051L1048 544Z" fill="#8a8a8a"/>
<g fill="#969696"><path d="M1008.500 529.500H1016L1012.200 526ZM1008.500 536.500H1016L1012.200 540Z"/></g>
<g transform="translate(805 563)"><path class="ic" stroke-width="1.500" stroke="#e4e4e4" d="M-6.800 0.500C-4.500 -6 4.500 -6 6.800 0.500"/><path fill="none" stroke-width="1.100" stroke="#a8a8a8" d="M-6.300 3C-3.500 9 3.500 9 6.300 3"/><circle cx="0" cy="0" r="3.300" fill="#d4d4d4"/></g><g transform="translate(805 590)"><path class="ic" stroke-width="1.500" stroke="#e4e4e4" d="M-6.800 0.500C-4.500 -6 4.500 -6 6.800 0.500"/><path fill="none" stroke-width="1.100" stroke="#a8a8a8" d="M-6.300 3C-3.500 9 3.500 9 6.300 3"/><circle cx="0" cy="0" r="3.300" fill="#d4d4d4"/></g><g transform="translate(805 617)"><path class="ic" stroke-width="1.500" stroke="#e4e4e4" d="M-6.800 0.500C-4.500 -6 4.500 -6 6.800 0.500"/><path fill="none" stroke-width="1.100" stroke="#a8a8a8" d="M-6.300 3C-3.500 9 3.500 9 6.300 3"/><circle cx="0" cy="0" r="3.300" fill="#d4d4d4"/></g>
<path d="M823 565L826 569.500L831 561" stroke="#b0b0b0" stroke-width="1.800" fill="none"/>
<g transform="translate(874 558)"><path class="ic" stroke-width="1.100" d="M-1 -4.500H4.500V2L2 4.500H-3"/><path class="ic" stroke-width="1.100" d="M4.500 2H2V4.500"/><path class="ic" stroke-width="1.500" d="M-4.800 -2.800L0.800 2"/></g><g transform="translate(874 585)"><path class="ic" stroke-width="1.100" d="M-1 -4.500H4.500V2L2 4.500H-3"/><path class="ic" stroke-width="1.100" d="M4.500 2H2V4.500"/><path class="ic" stroke-width="1.500" d="M-4.800 -2.800L0.800 2"/></g><g transform="translate(874 612)"><path class="ic" stroke-width="1.100" d="M-1 -4.500H4.500V2L2 4.500H-3"/><path class="ic" stroke-width="1.100" d="M4.500 2H2V4.500"/><path class="ic" stroke-width="1.500" d="M-4.800 -2.800L0.800 2"/></g>
<g transform="translate(1004 564)" fill="#7d93a8" stroke="#7d93a8"><rect x="-6" y="-0.800" width="12" height="8" stroke="none"/><path fill="none" stroke-width="1.500" d="M5.300 -0.500C5.300 -4 3.500 -6 0.500 -6.200"/></g><g transform="translate(1004 591)" fill="#6a6a6a" stroke="#6a6a6a"><rect x="-6" y="-0.800" width="12" height="8" stroke="none"/><path fill="none" stroke-width="1.500" d="M5.300 -0.500C5.300 -4 3.500 -6 0.500 -6.200"/></g><g transform="translate(1004 618)" fill="#d2d2d2" stroke="#d2d2d2"><rect x="-6" y="-0.500" width="12" height="8" stroke="none"/><path fill="none" stroke-width="1.600" d="M-3.500 -0.500V-3A3.500 3.500 0 0 1 3.500 -3V-0.500"/></g>
<path transform="translate(0 0)" fill="none" stroke="#8aa0b4" stroke-width="1.500" d="M1027.500 559C1026.300 563 1024.300 569 1020.800 569C1017.800 569 1016.500 566.500 1017 563.500C1017.500 560.500 1019.200 558.800 1021.700 558.800C1024.600 558.800 1025.200 563 1025.600 566C1025.900 568 1026.700 569 1028.400 568.700"/><path transform="translate(0 27)" fill="none" stroke="#7a7a7a" stroke-width="1.500" d="M1027.500 559C1026.300 563 1024.300 569 1020.800 569C1017.800 569 1016.500 566.500 1017 563.500C1017.500 560.500 1019.200 558.800 1021.700 558.800C1024.600 558.800 1025.200 563 1025.600 566C1025.900 568 1026.700 569 1028.400 568.700"/><path transform="translate(0 54)" fill="none" stroke="#7a7a7a" stroke-width="1.500" d="M1027.500 559C1026.300 563 1024.300 569 1020.800 569C1017.800 569 1016.500 566.500 1017 563.500C1017.500 560.500 1019.200 558.800 1021.700 558.800C1024.600 558.800 1025.200 563 1025.600 566C1025.900 568 1026.700 569 1028.400 568.700"/>
<g transform="translate(1034 557)"><rect width="15" height="15" fill="#6d879f"/><g fill="#8098ae"><rect x="5" width="5" height="5"/><rect y="5" width="5" height="5"/><rect x="10" y="5" width="5" height="5"/><rect x="5" y="10" width="5" height="5"/></g></g><g transform="translate(1034 584)"><rect width="15" height="15" fill="#565656"/><g fill="#6c6c6c"><rect x="5" width="5" height="5"/><rect y="5" width="5" height="5"/><rect x="10" y="5" width="5" height="5"/><rect x="5" y="10" width="5" height="5"/></g></g><g transform="translate(1034 611)"><rect width="15" height="15" fill="#565656"/><g fill="#6c6c6c"><rect x="5" width="5" height="5"/><rect y="5" width="5" height="5"/><rect x="10" y="5" width="5" height="5"/><rect x="5" y="10" width="5" height="5"/></g></g>
<!-- mouse cursor over thumb -->
<path d="M844 585.500V598L847 595.500L849 600L851 599L849 594.500H853Z" fill="#000" stroke="#fff" stroke-width="0.800"/>
<!-- bottom toolbar -->
<path class="ic" stroke-width="2" d="M808 675V693M799 684H817"/><path d="M825 682.500H832L828.500 686Z" fill="#8a8a8a"/>
<path class="ic" stroke-width="1.800" d="M847.500 675H861V688.500H847.500Z"/><path class="ic" stroke-width="1.800" d="M843.300 679V693H857.500"/>
<path class="ic" stroke-width="2.100" d="M874.500 679.500L884 688.500L893.500 679.500"/>
<path class="ic" stroke-width="2.100" d="M906.500 688.500L916 679.500L925.500 688.500"/>
<path class="ic" stroke-width="2" d="M938 678H958M938 684H958M938 690H958"/><path class="if" d="M952 676H955V680H952ZM944 682H947V686H944ZM948 688H951V692H948Z"/><path d="M965 682.500H972L968.500 686Z" fill="#8a8a8a"/>
<path class="if" d="M1029 677H1047V679H1029ZM1031.500 681H1044.500V692.500C1044.500 693.500 1044 694 1043 694H1033C1032 694 1031.500 693.500 1031.500 692.500Z"/><path class="ic" stroke-width="1.500" d="M1034 677.500C1034 675 1036 674.500 1038 674.500S1042 675 1042 677.500"/>
</svg>


<div class="a" style="left:12px;top:706px;width:15px;height:15px;border:1px solid #d4d4d4;background:#494949;box-shadow:inset 0 0 0 1px #383838"></div>
<svg style="left:0;top:0" width="1057" height="732"><circle cx="19.500" cy="713.500" r="4.200" fill="none" stroke="#e0e0e0" stroke-width="1.300" stroke-linecap="round" stroke-dasharray="0.100 2.099"/>
<circle cx="700" cy="714" r="10" fill="#2e2e2e"/><path d="M695 714H705" stroke="#e0e0e0" stroke-width="1.200"/><circle cx="695.500" cy="714" r="1.300" fill="#e0e0e0"/><path d="M706 714L703.500 712.500V715.500Z" fill="#e0e0e0"/><path d="M700 705V707M700 721V723" stroke="#555" stroke-width="1"/>
<rect x="924" y="712.500" width="80" height="4" rx="2" fill="#333"/><rect x="924" y="713" width="31" height="3" rx="1.500" fill="#5d86b2"/>
<rect x="949.500" y="709.500" width="11" height="10" rx="2" fill="#4c4c4c" stroke="#2e2e2e"/>
<path class="ic" stroke-width="1.200" d="M1010.500 709.500H1025.500V718.500H1010.500ZM1018 718.500V722M1012.500 722H1023.500"/><rect x="1017" y="713" width="2" height="2" class="if"/>
<g fill="#7a7a7a"><rect x="1050" y="717" width="2" height="2"/><rect x="1050" y="720" width="2" height="2"/><rect x="1047" y="720" width="2" height="2"/><rect x="1050" y="723" width="2" height="2"/><rect x="1047" y="723" width="2" height="2"/><rect x="1044" y="723" width="2" height="2"/><rect x="1050" y="726" width="2" height="2"/><rect x="1047" y="726" width="2" height="2"/><rect x="1044" y="726" width="2" height="2"/><rect x="1041" y="726" width="2" height="2"/></g>
</svg>
<div class="t" style="left:42px;top:707px;font-size:12.8px;color:#cfcfcf;letter-spacing:0.38px">b) B...city</div>
<div class="t" style="left:124px;top:707px;font-size:12.8px;color:#cfcfcf;letter-spacing:0.2px">RGB/Alp...trc.icc</div>
<div class="a" style="left:526px;top:704px;width:156px;height:21px;border:1px solid #5a5a5a;background:#3e3e3e"></div>
<div class="a" style="left:528px;top:707px;width:1px;height:15px;background:#53728e"></div>
<div class="t" style="left:529px;top:707px;font-size:12.8px;color:#d2d2d2;letter-spacing:0.33px">2,480 <u>x</u> 3,508 (78.3 MiB)</div>
<div class="t" style="left:720px;top:707px;font-size:12.3px;color:#d2d2d2;letter-spacing:0.3px">0.00<span style="position:relative;top:-3px;font-size:9px">°</span></div>
<div class="t" style="left:861px;top:707px;font-size:12.3px;color:#d2d2d2;letter-spacing:0.4px">100.0%</div>

</body></html>
